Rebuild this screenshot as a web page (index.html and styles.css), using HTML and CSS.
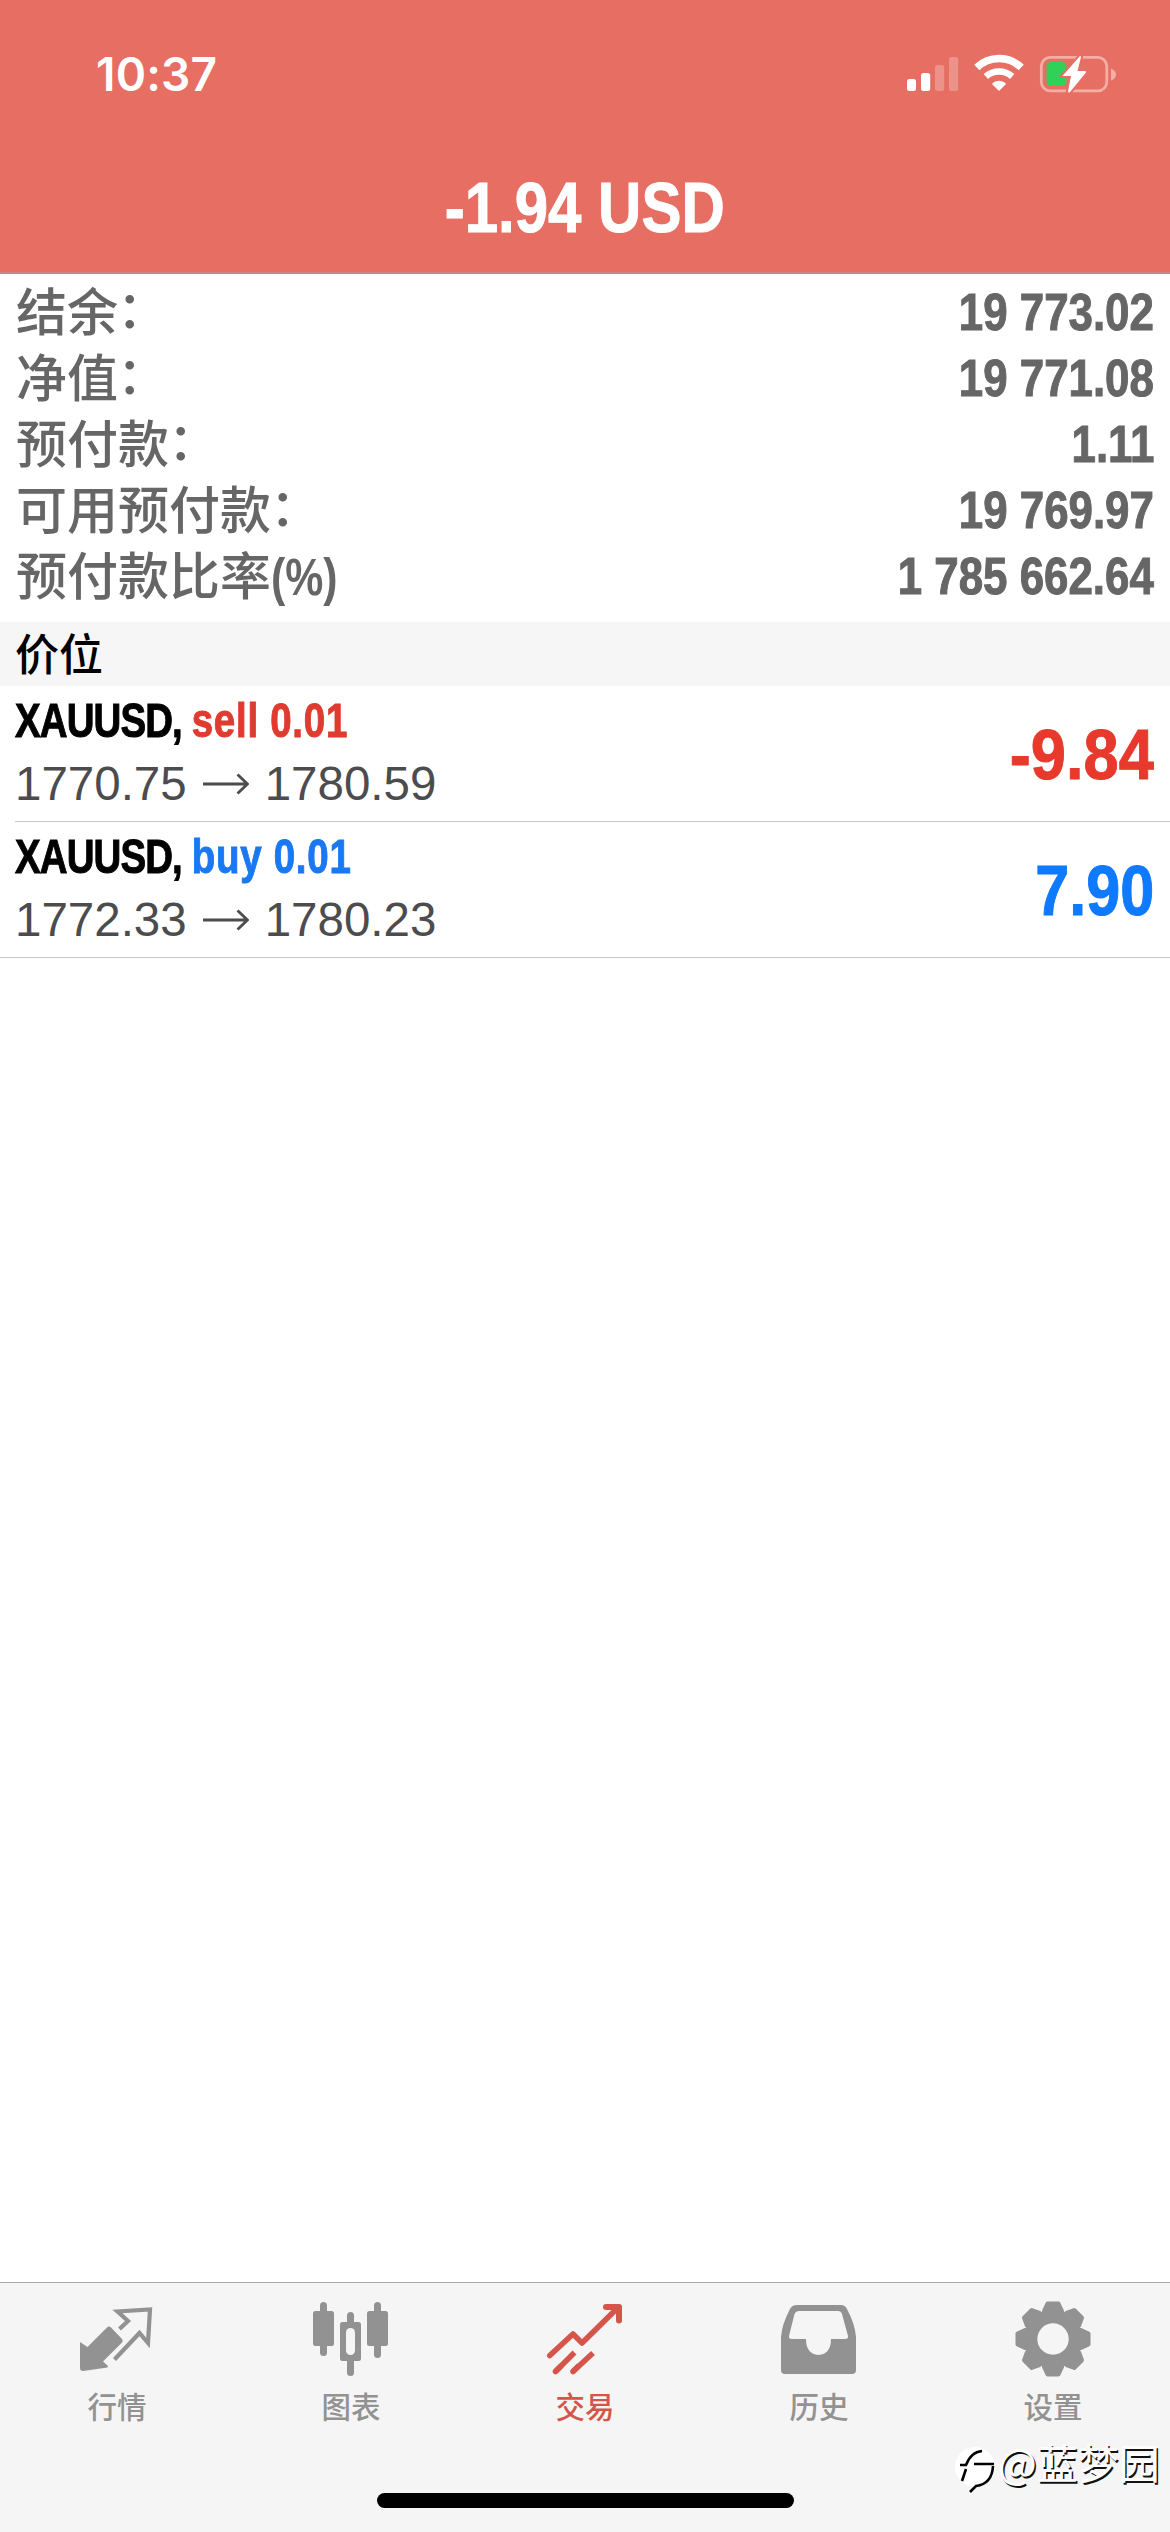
FILE: index.html
```html
<!DOCTYPE html>
<html lang="zh-CN">
<head>
<meta charset="utf-8">
<title>交易</title>
<link rel="stylesheet" href="styles.css">
</head>
<body>
<div class="screen">
  <header class="header">
    <div class="status">
      <span class="clock">10:37</span>
      <svg class="status-icons" width="214" height="40" viewBox="905 54 214 40">
        <g fill="#fff">
          <rect x="907" y="79" width="9" height="12" rx="2.5"/>
          <rect x="921" y="73" width="9.2" height="18" rx="2.5"/>
          <g opacity=".25">
            <rect x="935" y="65" width="9.2" height="26" rx="2.5"/>
            <rect x="949" y="57" width="9.2" height="34" rx="2.5"/>
          </g>
        </g>
        <g fill="none" stroke="#fff">
          <path d="M976.800 67.500A32 32 0 0 1 1021.200 67.500" stroke-width="7.500"/>
          <path d="M985.800 76.500A20 20 0 0 1 1012.200 76.500" stroke-width="6.500"/>
        </g>
        <path d="M999 91l-6.500-6.500q-.8-1 .4-1.800a11 11 0 0 1 12.200 0q1.200.8.4 1.800z" fill="#fff"/>
        <rect x="1041.300" y="57.300" width="65.500" height="33.500" rx="9" fill="none" stroke="#f3aea6" stroke-width="2.800"/>
        <path d="M1111 68.500q5 2 5 6t-5 6z" fill="#f3aea6"/>
        <rect x="1046.500" y="62" width="20" height="24" rx="4.500" fill="#30d158"/>
        <path d="M1079.500 56.500L1062.500 76h8.500l-3 15.500q.6 2 2 .5L1086 72.500q.6-1.500-1-1.500h-7.500l3.500-14q-.5-1.500-1.500-.5z" fill="#fff" stroke="#e66e62" stroke-width="4" paint-order="stroke"/>
      </svg>
    </div>
    <h1 class="total"><span class="condensed">-1.94 USD</span></h1>
  </header>

  <main class="content">
    <dl class="summary">
      <div class="summary-row"><dt>结余<span class="colon">：</span></dt><dd class="condensed">19 773.02</dd></div>
      <div class="summary-row"><dt>净值<span class="colon">：</span></dt><dd class="condensed">19 771.08</dd></div>
      <div class="summary-row"><dt>预付款<span class="colon">：</span></dt><dd class="condensed">1.11</dd></div>
      <div class="summary-row"><dt>可用预付款<span class="colon">：</span></dt><dd class="condensed">19 769.97</dd></div>
      <div class="summary-row"><dt>预付款比率<span class="percent">(%)</span></dt><dd class="condensed">1 785 662.64</dd></div>
    </dl>
    <h2 class="section">价位</h2>
    <ul class="positions">
      <li class="position">
        <div class="deal">
          <div class="symbol">XAUUSD, <span class="side sell">sell 0.01</span></div>
          <div class="prices"><span>1770.75</span><svg class="arrow" width="46" height="22" viewBox="0 0 46 22"><path d="M0 11H44M34.500 1.500L44.500 11L34.500 20.500"/></svg><span>1780.59</span></div>
        </div>
        <div class="profit condensed sell">-9.84</div>
      </li>
      <li class="position">
        <div class="deal">
          <div class="symbol">XAUUSD, <span class="side buy">buy 0.01</span></div>
          <div class="prices"><span>1772.33</span><svg class="arrow" width="46" height="22" viewBox="0 0 46 22"><path d="M0 11H44M34.500 1.500L44.500 11L34.500 20.500"/></svg><span>1780.23</span></div>
        </div>
        <div class="profit condensed buy">7.90</div>
      </li>
    </ul>
  </main>

  <nav class="tabs">
    <a class="tab">
      <svg width="80" height="80" viewBox="77 2299 80 80" fill="currentColor">
        <path d="M80 2342l7.500 5L107 2327.500q2-2 4 0L122 2339q1.500 2 0 3.500L103 2361.500l5 4.500-.5 1.500L83 2371q-3 0-3-3z"/>
        <path d="M119.500 2329l8.500-8-10.500-9.500L150 2309.500 148 2343l-8.500-10L114.500 2359.500" fill="none" stroke="currentColor" stroke-width="4.200"/>
      </svg>
      <span>行情</span>
    </a>
    <a class="tab">
      <svg width="80" height="80" viewBox="311 2299 80 80" fill="currentColor">
        <rect x="320" y="2302" width="7" height="54" rx="3.500"/><rect x="313" y="2311" width="21" height="35" rx="2.500"/>
        <rect x="374" y="2302" width="7" height="56" rx="3.500"/><rect x="367" y="2311" width="21" height="35" rx="2.500"/>
        <rect x="347" y="2312" width="7" height="15" rx="3.500"/><rect x="347" y="2350" width="7" height="26" rx="3.500"/>
        <path d="M342.500 2322h16q2.500 0 2.500 2.500v34q0 2.500-2.500 2.500h-16q-2.500 0-2.500-2.500v-34q0-2.500 2.500-2.500z"/>
        <rect x="346" y="2328" width="9" height="27" rx="4.500" fill="#f5f5f5"/>
      </svg>
      <span>图表</span>
    </a>
    <a class="tab active">
      <svg width="80" height="80" viewBox="545 2299 80 80" fill="none" stroke="currentColor" stroke-width="5.600" stroke-linecap="round" stroke-linejoin="round">
        <path d="M549.800 2355.500L573 2334l9 9L617 2308.500"/>
        <path d="M606 2307H619V2320.500" stroke-width="6"/>
        <path d="M555.500 2371.500L574.500 2352.500M573 2371.500L593 2353" stroke-linecap="butt"/>
        <path d="M555.500 2371.500l5-5M573 2371.500l5-5"/>
      </svg>
      <span>交易</span>
    </a>
    <a class="tab">
      <svg width="80" height="80" viewBox="779 2299 80 80" fill="currentColor">
        <path fill-rule="evenodd" d="M797 2305H841q4 0 6 4 8 15 9 28V2370q0 4-4 4H785q-4 0-4-4V2337q1-13 9-28 2-4 7-4zM799 2311q-3 0-4.500 3L789 2336q-.5 3 3 3h14q0 15 12.500 16Q831 2354 831 2339h14q3.500 0 3-3L842 2314q-1-3-4-3z"/>
      </svg>
      <span>历史</span>
    </a>
    <a class="tab">
      <svg width="80" height="80" viewBox="-40 -40 80 80" fill="currentColor">
        <mask id="hub"><rect x="-40" y="-40" width="80" height="80" fill="#fff"/><circle r="15.700" fill="#000"/></mask>
        <g mask="url(#hub)">
          <circle r="28.800"/>
          <g stroke="currentColor" stroke-width="4" stroke-linejoin="round">
            <path id="tooth" d="M-9-28L-5.500-35.500H5.500L9-28V0H-9z"/>
            <use href="#tooth" transform="rotate(45)"/><use href="#tooth" transform="rotate(90)"/><use href="#tooth" transform="rotate(135)"/>
            <use href="#tooth" transform="rotate(180)"/><use href="#tooth" transform="rotate(225)"/><use href="#tooth" transform="rotate(270)"/><use href="#tooth" transform="rotate(315)"/>
          </g>
        </g>
      </svg>
      <span>设置</span>
    </a>
  </nav>
  <div class="home-indicator"></div>
  <div class="watermark">
    <svg width="44" height="50" viewBox="954 2444 44 50">
      <circle cx="975" cy="2467" r="20" fill="#fff"/>
      <g fill="none" stroke="#000" stroke-width="2.600">
        <path d="M960 2465h6Q971 2452 982 2451"/>
        <path d="M962 2481l4-12M974 2464H994"/>
        <path d="M993 2466Q992 2484 976 2486L970 2492"/>
      </g>
    </svg>
    <span>@蓝梦园</span>
  </div>
</div>
</body>
</html>
```
FILE: styles.css
```css
* { box-sizing: border-box; }
body, h1, h2, dl, dd, ul { margin: 0; padding: 0; }
body { background: #fff; font-family: "Liberation Sans", "Noto Sans CJK SC", sans-serif; }

.screen {
  position: relative;
  display: flex;
  flex-direction: column;
  width: 1170px;
  height: 2532px;
  overflow: hidden;
}

.header { height: 274px; background: #e66e62; border-bottom: 2px solid #c08a8c; color: #fff; }
.status { display: flex; justify-content: space-between; align-items: center; height: 148px; padding: 0 51px 0 96px; }
.clock { font: 600 46px/60px Inter, sans-serif; letter-spacing: .2px; }
.total { font-size: 71px; line-height: 80px; height: 80px; margin-top: 20px; text-align: center; font-weight: 700; }

.condensed { display: inline-block; font-weight: 700; white-space: nowrap; transform: scaleX(.86); transform-origin: right; -webkit-text-stroke: 1px currentColor; }
.total .condensed { transform: scaleX(.845); transform-origin: center; }

.content { flex: 1; }
.summary { height: 348px; padding: 6px 16px 0; color: #666; }
.summary-row { display: flex; justify-content: space-between; align-items: center; height: 66px; }
.summary dt { padding-top: 2px; font: 500 51px/66px "Liberation Sans", "Noto Sans CJK SC", sans-serif; }
.summary dd { font-size: 51px; line-height: 66px; }
.colon { display: inline-block; transform: translate(-1px, -3px); }
.percent { display: inline-block; font-weight: 700; transform: scaleX(.84); transform-origin: left; }

.section { height: 64px; padding-left: 15px; background: #f6f6f6; font: 500 44px/61px "Noto Sans CJK SC", sans-serif; }

.positions { list-style: none; }
.position { display: flex; justify-content: space-between; height: 136px; margin-left: 15px; padding-right: 16px; border-bottom: 1px solid #c8c8ca; }
.position:last-child { margin-left: 0; padding-left: 15px; }
.symbol { margin-top: 8px; height: 63px; font-size: 47.500px; font-weight: 700; line-height: 54px; letter-spacing: -1.100px; white-space: nowrap; transform: scaleX(.81); transform-origin: left; -webkit-text-stroke: 1px currentColor; }
.side { letter-spacing: .9px; }
.sell { color: #df3b2f; }
.buy { color: #1a78f2; }
.prices { display: flex; align-items: center; gap: 16px; height: 54px; color: #4c4c4e; font-size: 47.500px; line-height: 54px; }
.arrow { fill: none; stroke: #4c4c4e; stroke-width: 2.800; }
.profit { font-size: 71px; line-height: 138px; }
.profit.sell { color: #e8392c; transform: scaleX(.89); }
.profit.buy { color: #0d7aff; }

.tabs { display: flex; height: 250px; border-top: 1px solid #a8a8a8; background: #f5f5f5; }
.tab { flex: 1; display: flex; flex-direction: column; align-items: center; padding-top: 16px; color: #929292; font: 500 29.500px/44px "Noto Sans CJK SC", sans-serif; }
.tab span { margin-top: 4px; }
.tab.active { color: #d5554b; }

.home-indicator { position: absolute; left: 377px; top: 2493px; width: 417px; height: 15px; border-radius: 8px; background: #000; }
.watermark { position: absolute; left: 954px; top: 2444px; display: flex; align-items: flex-start; color: #fff; font: 400 41px/50px "Noto Sans CJK SC", sans-serif; text-shadow: 1.500px 1.500px 0 #111; white-space: nowrap; }
.watermark span { margin-top: -8px; }
```
